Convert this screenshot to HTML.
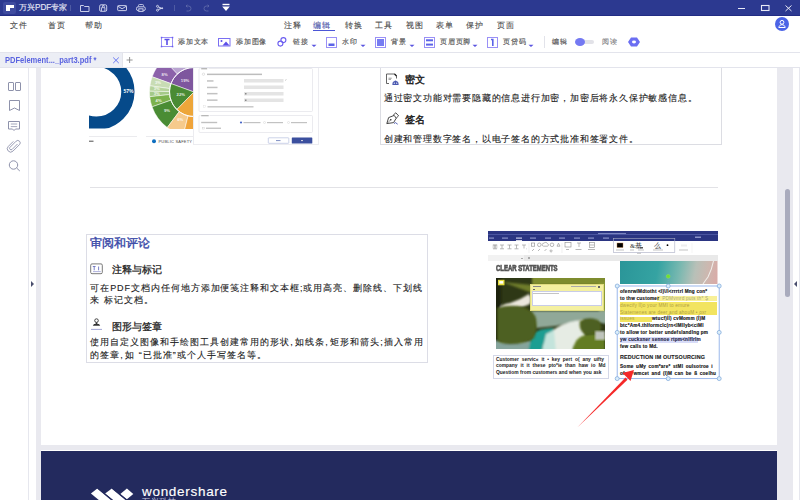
<!DOCTYPE html>
<html><head><meta charset="utf-8">
<style>
*{margin:0;padding:0;box-sizing:border-box}
html,body{width:800px;height:500px;overflow:hidden;background:#fff;font-family:"Liberation Sans",sans-serif;color:#333}
.a{position:absolute}
.t{position:absolute;white-space:nowrap;line-height:1}
#title{z-index:5;left:0;top:0;width:800px;height:16px;background:#2c3990;border-bottom:1px solid #222c84}
#menu{z-index:5;left:0;top:16px;width:800px;height:15px;background:#fff}
#tool{z-index:5;left:0;top:31px;width:800px;height:22px;background:#fff;border-bottom:1px solid #e3e4ec}
#tabs{z-index:5;left:0;top:53px;width:800px;height:15px;background:#fff;border-bottom:1px solid #e3e4ec}
.m{font-size:7.9px;color:#4a4a4a;letter-spacing:1px;-webkit-text-stroke:0.1px #4a4a4a}
.tl{font-size:6.7px;color:#555;letter-spacing:0.75px;-webkit-text-stroke:0.15px #555}
.c{margin-right:1.5px}
.bt{font-size:10px;color:#222;-webkit-text-stroke:0.12px #222}
.hd{font-size:9.8px;color:#222;-webkit-text-stroke:0.28px #222}
.arr{position:absolute;width:0;height:0;border-left:2.5px solid transparent;border-right:2.5px solid transparent;border-top:3px solid #4b55d6}
</style></head><body>
<!-- title bar -->
<div id="title" class="a">
  <div class="a" style="left:3px;top:2px;width:13px;height:12px;background:#3e4b9f;border-radius:2px"></div>
  <div class="a" style="left:6px;top:5px;width:8px;height:3px;background:#fff"></div>
  <div class="a" style="left:6px;top:8px;width:4px;height:3px;background:#fff"></div>
  <div class="t" style="left:19px;top:4px;font-size:8.2px;color:#e4e6f4;-webkit-text-stroke:0.15px #e4e6f4">万兴PDF专家</div>
  <svg class="a" style="left:0;top:0" width="800" height="15" fill="none" stroke="#c9cde8" stroke-width="1">
    <line x1="70.5" y1="5" x2="70.5" y2="11" stroke="#4f5ba3"/>
    <path d="M80.5 5.5h3l1 1h4.5v5h-8.5z"/>
    <rect x="99.7" y="4.8" width="7" height="6.5" rx="1.3"/><path d="M101.5 11v-3.3h3.4v3.3 M102.3 7.7l0.3-2.2h1.4l0.3 2.2" stroke-width="0.9"/>
    <rect x="117.7" y="5.6" width="8.8" height="5" rx="0.6"/><path d="M117.9 6.2l4.2 2.6 4.2-2.6"/>
    <path d="M138.5 6.5v-1a1 1 0 0 1 1-1h3a1 1 0 0 1 1 1v1" stroke-width="0.9"/><rect x="136.5" y="6.8" width="8.8" height="3.8" rx="1.6"/><rect x="138.8" y="8.8" width="4.2" height="2.6" fill="#2c3990"/>
    <circle cx="157.5" cy="6.3" r="1"/><circle cx="157.5" cy="10.2" r="1"/><path d="M158.4 6.9l4.6 1.9 M158.4 9.6l4.6-1.9" stroke-width="1.1"/>
    <line x1="174.5" y1="5" x2="174.5" y2="11" stroke="#4f5ba3"/>
    <path d="M186 6h2.5a2.5 2.5 0 0 1 0 5h-2 M186 6l1.3-1.3 M186 6l1.3 1.3" stroke="#5a65a8"/>
    <path d="M209 6h-2.5a2.5 2.5 0 0 0 0 5h2 M209 6l-1.3-1.3 M209 6l-1.3 1.3" stroke="#5a65a8"/>
    <path d="M222.5 4.5h7" stroke="#fff" stroke-width="1.4"/><path d="M222.2 6.5h7.6l-3.8 4.5z" fill="#fff" stroke="none"/>
    <line x1="738" y1="8.5" x2="745" y2="8.5" stroke="#e8eaf6"/>
    <rect x="761.5" y="5.5" width="7.5" height="5" stroke="#e8eaf6" stroke-width="1.1"/>
    <path d="M785.5 5.5l6 5.5 M791.5 5.5l-6 5.5" stroke="#e8eaf6"/>
  </svg>
</div>
<!-- menu -->
<div id="menu" class="a">
  <div class="t m" style="left:10px;top:5.7px">文件</div>
  <div class="t m" style="left:48px;top:5.7px">首页</div>
  <div class="t m" style="left:85px;top:5.7px">帮助</div>
  <div class="t m" style="left:284px;top:5.7px">注释</div>
  <div class="t m" style="left:313px;top:5.7px;color:#4b55d6">编辑</div>
  <div class="a" style="left:313px;top:13.6px;width:22px;height:1.4px;background:#4b55d6"></div>
  <div class="t m" style="left:345px;top:5.7px">转换</div>
  <div class="t m" style="left:375px;top:5.7px">工具</div>
  <div class="t m" style="left:406px;top:5.7px">视图</div>
  <div class="t m" style="left:436px;top:5.7px">表单</div>
  <div class="t m" style="left:466px;top:5.7px">保护</div>
  <div class="t m" style="left:497px;top:5.7px">页面</div>
  <div class="a" style="left:775px;top:0.6px;width:14px;height:14px;border-radius:50%;background:#4b63e6"></div>
  <svg class="a" style="left:775px;top:0.6px" width="14" height="14" fill="none" stroke="#fff" stroke-width="1"><circle cx="7" cy="5.3" r="1.9"/><path d="M3.8 10.5c0.4-2 1.6-2.8 3.2-2.8s2.8 0.8 3.2 2.8z"/></svg>
</div>
<!-- toolbar -->
<div id="tool" class="a">
  <svg class="a" style="left:0;top:0" width="800" height="21" fill="none" stroke="#6c5ff0" stroke-width="1">
    <rect x="161.5" y="6.5" width="11" height="9" stroke="#9a90f6"/>
    <rect x="160.8" y="5.8" width="1.5" height="1.5" fill="#6c5ff0" stroke="none"/><rect x="171.8" y="5.8" width="1.5" height="1.5" fill="#6c5ff0" stroke="none"/>
    <rect x="160.8" y="14.8" width="1.5" height="1.5" fill="#6c5ff0" stroke="none"/><rect x="171.8" y="14.8" width="1.5" height="1.5" fill="#6c5ff0" stroke="none"/>
    <path d="M164.5 8.5h5 M167 8.5v5.5" stroke="#5b4ee8" stroke-width="1.6"/>
    <rect x="218.5" y="7.5" width="11.5" height="7.5" stroke="#7a6ff2"/>
    <circle cx="221.5" cy="10" r="1" fill="#5b4ee8" stroke="none"/>
    <path d="M222.5 14.5l3.5-4 3.5 4z" fill="#5b4ee8" stroke="none"/>
    <circle cx="280.4" cy="12.6" r="2.5" stroke="#6a5cf0" stroke-width="1.1"/><circle cx="283.4" cy="9.1" r="2.5" stroke="#6a5cf0" stroke-width="1.1"/>
    <rect x="326.5" y="6.5" width="10" height="10" stroke="#9a90f6"/><rect x="328.5" y="12.5" width="6" height="2.5" fill="#5b63e8" stroke="none"/>
    <rect x="375.5" y="6.5" width="10" height="10" stroke="#9a90f6"/><rect x="377" y="8" width="7" height="7" fill="#767cf2" stroke="none"/>
    <rect x="424.5" y="6.5" width="10" height="10" stroke="#9a90f6"/><rect x="426" y="8.3" width="7" height="2" fill="#5b63e8" stroke="none"/><rect x="426" y="12.6" width="7" height="2" fill="#5b63e8" stroke="none"/>
    <rect x="487.5" y="6.5" width="10" height="10" stroke="#9a90f6"/><path d="M491 8.5h1.8v6.5" stroke="#5b63e8" stroke-width="1.6"/>
    <path d="M311.5 13.8h5l-2.5 2.2z M360.5 13.8h5l-2.5 2.2z M409.5 13.8h5l-2.5 2.2z M472.5 13.8h5l-2.5 2.2z M528.5 13.8h5l-2.5 2.2z" fill="#5a55e0" stroke="none"/>
    <line x1="544.5" y1="5" x2="544.5" y2="17" stroke="#e2e3ea"/>
    <path d="M631 6.5h6l3 4.5-3 4.5h-6l-3-4.5z" fill="#6b6ef2" stroke="none"/>
    <ellipse cx="634" cy="11" rx="2" ry="1.4" fill="#fff" stroke="none"/>
  </svg>
  <div class="t tl" style="left:178px;top:8px">添加文本</div>
  <div class="t tl" style="left:236px;top:8px">添加图像</div>
  <div class="t tl" style="left:293px;top:8px">链接</div>
  <div class="t tl" style="left:342px;top:8px">水印</div>
  <div class="t tl" style="left:391px;top:8px">背景</div>
  <div class="t tl" style="left:440px;top:8px">页眉页脚</div>
  <div class="t tl" style="left:503px;top:8px">页贷码</div>
  <div class="t tl" style="left:552px;top:8px">编辑</div>
  <div class="a" style="left:576px;top:9px;width:18px;height:4px;border-radius:2px;background:#e2e2e8"></div>
  <div class="a" style="left:575px;top:6.8px;width:9.8px;height:8px;border-radius:50%;background:#7479f2"></div>
  <div class="t tl" style="left:602px;top:8px;color:#b0b0b8">阅读</div>
</div>
<!-- tabs -->
<div id="tabs" class="a">
  <div class="a" style="left:0;top:0;width:122px;height:14px;background:#eceef5"></div>
  <div class="t" style="left:5px;top:3px;font-size:8.3px;font-weight:bold;color:#5a63e0;transform:scaleX(0.91);transform-origin:0 0">PDFelement..._part3.pdf *</div>
  <svg class="a" style="left:0;top:0" width="140" height="16" fill="none" stroke="#5a6af0" stroke-width="0.9">
    <path d="M113.2 4.5l5.6 5.6 M118.8 4.5l-5.6 5.6"/>
    <path d="M129.6 4v6 M126.6 7h6" stroke="#888"/>
    <line x1="122.5" y1="0" x2="122.5" y2="14" stroke="#e0e1e8"/>
  </svg>
</div>
<!-- sidebar -->
<div class="a" style="left:0;top:68px;width:28px;height:432px;background:#fff"></div>
<div class="a" style="left:28px;top:68px;width:1px;height:432px;background:#e6e7ee"></div>
<div class="a" style="left:36px;top:68px;width:5px;height:432px;background:#e9e9ef"></div>
<div class="a" style="left:777px;top:68px;width:16px;height:432px;background:#e9e9ef"></div>
<div class="a" style="left:799px;top:68px;width:1px;height:432px;background:#e6e7ee"></div>
<div class="a" style="left:785px;top:189px;width:5px;height:108px;border-radius:3px;background:#a9abbd"></div>
<svg class="a" style="left:0;top:68px" width="28" height="110" fill="none" stroke="#8e92ab" stroke-width="1">
  <rect x="8.5" y="14.5" width="5" height="8" rx="0.5"/><rect x="15.5" y="14.5" width="5" height="8" rx="0.5"/>
  <path d="M9.5 32.5h10v10l-5-2.5-5 2.5z"/>
  <path d="M8.5 53.5h11v7.5h-4l-1.5 1.5-1.5-1.5h-4z"/><path d="M10.8 56h6.4 M10.8 58.6h6.4" stroke-width="0.8"/>
  <path d="M17.5 76l-5.5 5.5a1.5 1.5 0 0 1-2.1-2.1l6.2-6.2a2.4 2.4 0 0 1 3.4 3.4l-6.5 6.5a3.3 3.3 0 0 1-4.7-4.7l5-5" stroke-width="0.9"/>
  <circle cx="13.5" cy="97" r="4.2"/><path d="M16.6 100l3.2 3"/>
</svg>
<div class="a" style="left:31px;top:281px;width:0;height:0;border-top:3.5px solid transparent;border-bottom:3.5px solid transparent;border-left:3.5px solid #4a4e6e"></div>
<div class="a" style="left:794px;top:281px;width:0;height:0;border-top:3.5px solid transparent;border-bottom:3.5px solid transparent;border-right:3.5px solid #4a4e6e"></div>
<!-- page content top -->
<svg class="a" style="left:89px;top:68px" width="104" height="80">
  <defs><clipPath id="cd"><rect x="0" y="0" width="104" height="60.5"/></clipPath></defs>
  <g clip-path="url(#cd)">
    <circle cx="7.4" cy="23.7" r="31.5" fill="none" stroke="#064a8a" stroke-width="13.3"/>
  </g>
  <text x="34.5" y="25" font-size="5" font-weight="bold" fill="#fff" font-family="Liberation Sans">57%</text>
  <line x1="0" y1="68.5" x2="48" y2="68.5" stroke="#e6e6ea" stroke-width="0.8"/>
  <rect x="0" y="72.6" width="4.5" height="1.3" fill="#777"/>
  <line x1="57" y1="68.5" x2="104" y2="68.5" stroke="#e6e6ea" stroke-width="0.8"/>
  <circle cx="65" cy="73.2" r="2" fill="#0e6fc0"/>
  <text x="69.5" y="74.8" font-size="4" fill="#4a4a4a" font-family="Liberation Sans" letter-spacing="0.2">PUBLIC SAFETY</text>
</svg>
<svg class="a" style="left:140px;top:68px" width="53" height="60.5" id="sun"><path d="M23.65,-8.55 A44.5,44.5 0 0 1 76.25,-14.54 L66.25,2.78 A24.5,24.5 0 0 0 37.29,6.08 Z" fill="#b9a4d0" stroke="#fff" stroke-width="0.5"/><path d="M12.18,8.78 A44.5,44.5 0 0 1 23.65,-8.55 L37.29,6.08 A24.5,24.5 0 0 0 30.98,15.62 Z" fill="#8c62aa" stroke="#fff" stroke-width="0.5"/><path d="M9.93,17.81 A44.5,44.5 0 0 1 12.18,8.78 L30.98,15.62 A24.5,24.5 0 0 0 29.74,20.59 Z" fill="#c8dcb4" stroke="#fff" stroke-width="0.5"/><path d="M9.51,23.22 A44.5,44.5 0 0 1 9.93,17.81 L29.74,20.59 A24.5,24.5 0 0 0 29.50,23.57 Z" fill="#b6d39c" stroke="#fff" stroke-width="0.5"/><path d="M9.74,28.65 A44.5,44.5 0 0 1 9.51,23.22 L29.50,23.57 A24.5,24.5 0 0 0 29.63,26.56 Z" fill="#a4c988" stroke="#fff" stroke-width="0.5"/><path d="M12.05,38.85 A44.5,44.5 0 0 1 9.74,28.65 L29.63,26.56 A24.5,24.5 0 0 0 30.91,32.18 Z" fill="#7cb24e" stroke="#fff" stroke-width="0.5"/><path d="M27.22,59.54 A44.5,44.5 0 0 1 12.05,38.85 L30.91,32.18 A24.5,24.5 0 0 0 39.26,43.57 Z" fill="#4a8c34" stroke="#fff" stroke-width="0.5"/><path d="M43.23,67.18 A44.5,44.5 0 0 1 27.22,59.54 L39.26,43.57 A24.5,24.5 0 0 0 48.07,47.77 Z" fill="#f6ca8c" stroke="#fff" stroke-width="0.5"/><path d="M76.25,62.54 A44.5,44.5 0 0 1 43.23,67.18 L48.07,47.77 A24.5,24.5 0 0 0 66.25,45.22 Z" fill="#f0a43a" stroke="#fff" stroke-width="0.5"/><path d="M54,24 L30.98,15.62 A24.5,24.5 0 0 1 66.25,2.78 Z" fill="#7e569e" stroke="#fff" stroke-width="0.5"/><path d="M54,24 L36.83,41.47 A24.5,24.5 0 0 1 30.98,15.62 Z" fill="#4a8b34" stroke="#fff" stroke-width="0.5"/><path d="M54,24 L66.25,45.22 A24.5,24.5 0 0 1 36.83,41.47 Z" fill="#eda63a" stroke="#fff" stroke-width="0.5"/><circle cx="54" cy="24" r="24.5" fill="none" stroke="#fff" stroke-width="0.9"/><text x="24.6" y="8.1" font-size="4.2" font-weight="bold" fill="#fff" fill-opacity="0.85" text-anchor="middle" font-family="Liberation Sans">8%</text><text x="45.0" y="13.7" font-size="4.2" font-weight="bold" fill="#fff" fill-opacity="0.85" text-anchor="middle" font-family="Liberation Sans">19%</text><text x="18.0" y="16.1" font-size="4.2" font-weight="bold" fill="#fff" fill-opacity="0.85" text-anchor="middle" font-family="Liberation Sans">3%</text><text x="16.8" y="22.1" font-size="4.2" font-weight="bold" fill="#fff" fill-opacity="0.85" text-anchor="middle" font-family="Liberation Sans">3%</text><text x="16.8" y="26.9" font-size="4.2" font-weight="bold" fill="#fff" fill-opacity="0.85" text-anchor="middle" font-family="Liberation Sans">3%</text><text x="18.6" y="34.1" font-size="4.2" font-weight="bold" fill="#fff" fill-opacity="0.85" text-anchor="middle" font-family="Liberation Sans">4%</text><text x="40.8" y="27.5" font-size="4.2" font-weight="bold" fill="#fff" fill-opacity="0.85" text-anchor="middle" font-family="Liberation Sans">22%</text><text x="27.0" y="44.3" font-size="4.2" font-weight="bold" fill="#fff" fill-opacity="0.85" text-anchor="middle" font-family="Liberation Sans">9%</text><text x="40.2" y="53.3" font-size="4.2" font-weight="bold" fill="#fff" fill-opacity="0.85" text-anchor="middle" font-family="Liberation Sans">6%</text></svg>
<!-- dialog -->
<div class="a" style="left:192.5px;top:68px;width:126.5px;height:77px;background:#fff;border-right:1px solid #ececf0;border-bottom:1px solid #ececf0;border-left:0.5px solid #ececf0"></div>
<svg class="a" style="left:193px;top:68px" width="126" height="78" font-family="Liberation Sans">
  <rect x="6" y="0.5" width="113.5" height="43" rx="1" fill="none" stroke="#e2e2e8" stroke-width="0.7"/>
  <rect x="7.5" y="-1" width="8" height="2.5" fill="#fff"/>
  <rect x="8.2" y="0" width="6" height="1.4" fill="#b8b8b8"/>
  <circle cx="10.5" cy="6.2" r="1.2" fill="none" stroke="#c8c8c8" stroke-width="0.5"/>
  <rect x="14" y="5.6" width="55" height="1.5" fill="#bdbdbd"/>
  <rect x="14" y="12.2" width="6.5" height="1.5" fill="#c2c2c2"/>
  <rect x="14" y="18.7" width="10.5" height="1.5" fill="#c2c2c2"/>
  <rect x="14" y="24.9" width="10.5" height="1.5" fill="#c2c2c2"/>
  <rect x="14" y="31.4" width="10.5" height="1.5" fill="#c2c2c2"/>
  <rect x="51" y="11" width="39.5" height="3.5" fill="#e4e4e4"/>
  <rect x="51" y="17.5" width="39.5" height="3.5" fill="#e4e4e4"/>
  <rect x="51" y="24" width="39.5" height="3.5" fill="#e4e4e4"/>
  <rect x="51" y="30.5" width="39.5" height="3.5" fill="#e4e4e4"/>
  <rect x="52" y="25" width="1.5" height="1.5" fill="#888"/><rect x="52" y="31.5" width="1.5" height="1.5" fill="#888"/>
  <path d="M92 12.5l1.5-1" stroke="#999" stroke-width="0.5"/>
  <rect x="10.5" y="37.7" width="1.8" height="1.8" fill="none" stroke="#ddd" stroke-width="0.4"/>
  <rect x="14.5" y="38.1" width="46" height="1.4" fill="#c6c6c6"/>
  <rect x="6" y="47.5" width="113.5" height="17" rx="1" fill="none" stroke="#e2e2e8" stroke-width="0.7"/>
  <rect x="7.5" y="46.5" width="9" height="2" fill="#fff"/>
  <rect x="8.2" y="47" width="7.5" height="1.3" fill="#b8b8b8"/>
  <rect x="8.2" y="53.8" width="16" height="1.4" fill="#c0c0c0"/>
  <circle cx="48" cy="54.5" r="1.1" fill="#4a66c8"/>
  <rect x="50.5" y="54" width="17" height="1.2" fill="#c2c2c2"/>
  <circle cx="71.5" cy="54.5" r="1" fill="none" stroke="#c8c8c8" stroke-width="0.4"/>
  <rect x="74" y="54" width="16" height="1.2" fill="#c2c2c2"/>
  <circle cx="95.5" cy="54.5" r="1" fill="none" stroke="#c8c8c8" stroke-width="0.4"/>
  <rect x="98" y="54" width="16" height="1.2" fill="#c2c2c2"/>
  <rect x="9.5" y="59.2" width="1.8" height="1.8" fill="none" stroke="#c8c8c8" stroke-width="0.4"/>
  <rect x="13" y="59.6" width="15" height="1.3" fill="#c0c0c0"/>
  <rect x="75.3" y="69.8" width="20.5" height="5.5" rx="0.6" fill="#fff" stroke="#a8b4d8" stroke-width="0.6"/>
  <rect x="83" y="72" width="4.5" height="1.1" fill="#8a98c8"/>
  <rect x="98.8" y="69.5" width="20.5" height="6" rx="0.6" fill="#3b4f9e"/>
  <rect x="108" y="72" width="2" height="1.1" fill="#ccd"/>
</svg>
<!-- right box 1 -->
<div class="a" style="left:380px;top:60px;width:342px;height:85px;border:1px solid #dcdde3;background:#fff"></div>
<svg class="a" style="left:380px;top:68px" width="24" height="60" fill="none">
  <path d="M9 15.5h-2.5v-9.5h8.5l1.5 1.5v3" stroke="#555" stroke-width="0.9"/>
  <path d="M14.5 6l2 2" stroke="#222" stroke-width="1.3"/>
  <path d="M8.5 10.2h3.3 M8.5 11.4h2.5" stroke="#777" stroke-width="0.7"/>
  <path d="M12.4 16.2a3.1 3.1 0 0 1 6.2 0z M12.4 16.2h6.2v0.8h-6.2z" fill="#4a58b0"/>
  <circle cx="15.5" cy="13.4" r="1" fill="#4a58b0"/>
  <circle cx="14.3" cy="15.2" r="0.6" fill="#fff"/><circle cx="16.7" cy="15.2" r="0.6" fill="#fff"/>
  <path d="M6.8 55.6 L8.6 49.6 L14.2 47.4 L16.2 50.2 L13.6 54.6z" stroke="#333" stroke-width="0.9"/>
  <path d="M13.2 47.2 L15.8 44.8 L18.6 47.8 L16.2 50.2" stroke="#333" stroke-width="0.9"/>
  <circle cx="10.8" cy="51.8" r="0.8" fill="#222"/>
  <path d="M10.5 52 L7.5 55" stroke="#333" stroke-width="0.5"/>
  <path d="M14 55.6l1.4-1 2.3 1.6" stroke="#4a58b0" stroke-width="0.9"/>
</svg>
<div class="t hd" style="left:405px;top:75px;font-size:10.2px;-webkit-text-stroke:0.45px #222">密文</div>
<div class="t bt" style="left:383.8px;top:94.3px;font-size:8.8px;letter-spacing:0.8px">通过密文功能对需要隐藏的信息进行加密，加密后将永久保护敏感信息。</div>
<div class="t hd" style="left:405px;top:115px;font-size:10.2px;-webkit-text-stroke:0.45px #222">签名</div>
<div class="t bt" style="left:383.8px;top:134.5px;font-size:8.8px;letter-spacing:0.8px">创建和管理数字签名，以电子签名的方式批准和签署文件。</div>
<!-- separator -->
<div class="a" style="left:90px;top:187px;width:628px;height:1px;background:#e2e2e6"></div>
<!-- review box -->
<div class="a" style="left:86px;top:233.5px;width:341.5px;height:129.5px;border:1px solid #dcdde6;background:#fff"></div>
<div class="t" style="left:90px;top:237.6px;font-size:11.9px;color:#3a4aa8;-webkit-text-stroke:0.4px #3a4aa8">审阅和评论</div>
<svg class="a" style="left:86px;top:260px" width="20" height="72" fill="none">
  <rect x="4.7" y="3.9" width="11.6" height="9.8" rx="1.3" stroke="#7a7a7a" stroke-width="1"/>
  <path d="M6.8 6.5h2.8 M8.2 6.5v3.8 M12.6 6.5v3.8" stroke="#6a72c0" stroke-width="0.9"/>
  <path d="M7 11.6h7.8" stroke="#7a80c8" stroke-width="0.6"/>
  <circle cx="10.5" cy="60.6" r="1.8" stroke="#333" stroke-width="0.9"/>
  <path d="M9.6 62.4h1.8v1.6h-1.8z" fill="#333"/>
  <path d="M6.8 65.8l1.2-1.8h5l1.2 1.8z" fill="#333"/>
  <path d="M5 69.4h11" stroke="#8a90cc" stroke-width="0.8"/>
</svg>
<div class="t hd" style="left:112px;top:264.5px">注释与标记</div>
<div class="t bt" style="left:90.3px;top:284px;font-size:9px;letter-spacing:0.94px">可在PDF文档内任何地方添加便笺注释和文本框;或用高亮、删除线、下划线</div>
<div class="t bt" style="left:90.3px;top:296.3px;font-size:9px;letter-spacing:1px">来 标记文档。</div>
<div class="t hd" style="left:112px;top:321.8px">图形与签章</div>
<div class="t bt" style="left:90.3px;top:338.3px;font-size:9px;letter-spacing:1px">使用自定义图像和手绘图工具创建常用的形状<span class="c">,</span>如线条<span class="c">,</span>矩形和箭头;插入常用</div>
<div class="t bt" style="left:90.3px;top:351.1px;font-size:9px;letter-spacing:1px">的签章<span class="c">,</span>如 “已批准”或个人手写签名等。</div>
<!-- embedded screenshot -->
<div class="a" id="emb" style="left:488px;top:231px;width:230px;height:150px;overflow:visible">
  <!-- title bar -->
  <div class="a" style="left:0;top:0;width:229.5px;height:10px;background:#2b3582"></div>
  <div class="a" style="left:0;top:3px;width:229.5px;height:0.6px;background:#4a55a0"></div>
  <div class="a" style="left:110px;top:1.5px;width:28px;height:1px;background:#7a84c0"></div>
  <svg class="a" style="left:0;top:0" width="230" height="24">
    <g fill="#8c93c8">
      <rect x="1" y="6.5" width="5" height="1.2"/><rect x="14" y="6.5" width="6" height="1.2"/><rect x="28" y="6.5" width="6" height="1.2" fill="#c8cce8"/>
      <rect x="42" y="6.5" width="6" height="1.2"/><rect x="57" y="6.5" width="6" height="1.2"/><rect x="71" y="6.5" width="6" height="1.2"/>
      <rect x="86" y="6.5" width="6" height="1.2"/><rect x="100" y="6.5" width="6" height="1.2"/><rect x="115" y="6.5" width="6" height="1.2"/>
      <rect x="207" y="5.5" width="6" height="1.5"/>
    </g>
    <rect x="28" y="9.2" width="6" height="0.8" fill="#fff"/>
  </svg>
  <!-- toolbar -->
  <div class="a" style="left:0;top:10px;width:229.5px;height:14px;background:#fff"></div>
  <svg class="a" style="left:0;top:10px" width="230" height="14" fill="none" stroke="#8a8a8a" stroke-width="0.6">
    <rect x="4.5" y="3.5" width="5" height="4" fill="#ddd" stroke="none"/>
    <path d="M5 4h4 M7 4v3.5 M5 7.8h4"/>
    <path d="M12 4h4 M14 4v3.5 M12 7.8h4"/>
    <path d="M19.5 4h4 M21.5 4v3.5 M19.5 7.8h4"/>
    <path d="M26.5 4h4 M28.5 4v3.5 M26.5 7.8h4"/>
    <path d="M34 4h4 M36 4v3.5 M38.5 7.8h0.5"/>
    <line x1="41" y1="2" x2="41" y2="12" stroke="#e6e6e6"/>
    <rect x="43.5" y="2" width="3.2" height="3.2"/><circle cx="51.3" cy="3.8" r="1.8"/><path d="M55.5 5.2a1.5 1.5 0 0 1 0.5-3 2 2 0 0 1 3.5 0.5 1.3 1.3 0 0 1 0 2.5z"/><circle cx="64" cy="3.8" r="1.8"/><path d="M69 5.2l1.5-3 1.5 3z"/>
    <path d="M44 10l2-2 M50 10l2-2 M56.5 10l2-2 M63 9a1 1 0 1 0 0.1 0"/>
    <line x1="74" y1="2" x2="74" y2="12" stroke="#e6e6e6"/>
    <rect x="77" y="1.5" width="6" height="4.5"/><path d="M89 2h4 M91 2v4"/><rect x="101.5" y="1.5" width="5" height="5"/><path d="M102 4h4"/>
    <g fill="#b8b8b8" stroke="none"><rect x="78" y="8" width="3" height="1"/><rect x="87.5" y="8" width="6" height="1"/><rect x="100" y="8" width="7" height="1"/></g>
    
    <rect x="129" y="2" width="6" height="4.5" fill="#000" stroke="#c08040" stroke-width="0.4"/>
    <text x="142" y="7" font-size="6.5" fill="#333" stroke="none" font-family="Liberation Serif">&amp;基</text>
    <rect x="152" y="6" width="3" height="1.5" fill="#555" stroke="none"/>
    <text x="166" y="7.3" font-size="7" fill="#444" stroke="none" font-family="Liberation Serif">么</text>
    <circle cx="179.5" cy="4.2" r="0.9" fill="#000" stroke="none"/>
    <g fill="#c4c4c4" stroke="none"><rect x="128" y="8.5" width="8" height="1"/><rect x="142" y="8.5" width="4" height="1"/><rect x="150" y="8.5" width="6" height="1"/><rect x="165" y="8.5" width="10" height="1"/><rect x="149" y="11.8" width="4" height="1"/><rect x="191" y="8.5" width="9" height="1"/></g>
    <rect x="193" y="3.5" width="6" height="2" fill="#eee" stroke="none"/>
    <line x1="204" y1="2" x2="204" y2="12" stroke="#eee"/>
  </svg>
  <svg class="a" style="left:0;top:0" width="230" height="24"><rect x="125.3" y="7.3" width="61.5" height="14.2" fill="none" stroke="#a8acc4" stroke-width="0.6"/></svg>
  <!-- gray strip -->
  <div class="a" style="left:0;top:24px;width:229.5px;height:6px;background:#e9e9e9"></div>
  <div class="a" style="left:0;top:24px;width:36px;height:6px;background:#f2f2f2"></div>
  <div class="a" style="left:33px;top:26.5px;width:0;height:0;border-left:1px solid transparent;border-right:1px solid transparent;border-top:1.2px solid #666"></div>
  <div class="a" style="left:40px;top:26px;width:2px;height:1.5px;background:#aaa"></div>
  <!-- page -->
  <div class="a" style="left:0;top:30px;width:229.5px;height:120px;background:#fff"></div>
  <div class="t" style="left:8px;top:32.5px;font-size:8.5px;font-weight:bold;color:#555;transform:scaleX(0.70);transform-origin:0 0;letter-spacing:0px;-webkit-text-stroke:0.7px #555">CLEAR STATEMENTS</div>
</div>
<!-- island photo -->
<svg class="a" style="left:496.3px;top:277.8px" width="109" height="71">
  <defs>
    <filter id="bl" x="-10%" y="-10%" width="120%" height="120%"><feGaussianBlur stdDeviation="0.9"/></filter>
    <clipPath id="pc"><rect width="109" height="71"/></clipPath>
    <pattern id="tex" width="3" height="3" patternUnits="userSpaceOnUse"><rect width="3" height="3" fill="#34461a"/><circle cx="1" cy="1" r="0.9" fill="#7a8e22"/></pattern>
    <pattern id="tex2" width="3" height="3" patternUnits="userSpaceOnUse"><rect width="3" height="3" fill="#46621c"/><circle cx="1.5" cy="1.5" r="0.9" fill="#9aae30"/></pattern>
  </defs>
  <g clip-path="url(#pc)">
  <rect width="109" height="71" fill="#2e3816"/>
  <g filter="url(#bl)">
    <rect x="36" y="-3" width="76" height="10" fill="#7e8c2e"/>
    <rect x="103" y="5" width="8" height="30" fill="#8a9a34"/>
    <path d="M6 4 L36 7 L36 15 Z" fill="#6e7c2a"/>
    <rect x="-3" y="-3" width="8" height="70" fill="#1e2410"/>
    <path d="M34 33 L111 33 L111 46 L84 42 L60 48 L40 50z" fill="#90a898"/>
    <path d="M-3 63 L34 62 L34 74 L-3 74z" fill="#86a49c"/>
    <path d="M32 74 L36 56 Q44 50 58 50 L54 74z" fill="#1f9e92"/>
    <path d="M46 74 Q48 58 60 50 Q74 42 88 42 L90 74z" fill="#e6ece4"/>
    <path d="M46 74 L50 56 L58 52 L60 74z" fill="#c4e4dc"/>
    <path d="M4 31 Q5 26 14 25 Q24 22 33 16 Q36 20 34 26 Q26 30 16 31 Q8 34 6 34z" fill="#ebe7dd"/>
  </g>
  <path d="M1 30 Q10 27 22 28 Q36 30 40 40 Q42 52 38 60 Q30 66 14 66 Q4 66 1 62z" fill="url(#tex)" filter="url(#bl)"/>
  <path d="M84 43 Q92 38 102 42 Q108 48 104 54 Q96 58 88 56 Q82 50 84 43z" fill="url(#tex)" filter="url(#bl)"/>
  <path d="M76 74 Q78 62 86 58 Q98 54 109 58 L109 74z" fill="url(#tex2)" filter="url(#bl)"/>
  <rect x="99" y="53" width="10" height="9" fill="#bfc4bc" filter="url(#bl)"/>
  </g>
  <rect x="2" y="1.8" width="6.5" height="5.5" fill="#e4dc3a"/>
  <rect x="3.3" y="3.1" width="3.9" height="2.5" fill="#fff"/>
</svg>
<!-- note -->
<div class="a" style="left:530px;top:283.5px;width:73.5px;height:27.5px;background:#f4f0a0;border:0.5px solid #e0dc80"></div>
<div class="a" style="left:532px;top:290.5px;width:70px;height:15px;background:#fff;border:0.6px solid #c8cce8"></div>
<div class="a" style="left:533px;top:286px;width:8px;height:1.2px;background:#888"></div>
<div class="a" style="left:533px;top:288.5px;width:2px;height:0.6px;background:#666"></div>
<div class="a" style="left:571px;top:286px;width:25px;height:1px;background:#aaa"></div>
<div class="a" style="left:598px;top:286px;width:2px;height:1.5px;background:#666"></div>
<div class="a" style="left:533px;top:292.5px;width:26px;height:1px;background:#c4c4c4"></div>
<!-- caption box -->
<div class="a" style="left:492.5px;top:354.5px;width:116px;height:24px;border:0.8px solid #d4d8e8;background:#fff"></div>
<div class="t" style="left:496px;top:357.6px;font-size:4.9px;font-weight:bold;color:#222;word-spacing:1.5px">Customer servic« it • key pert o( any uifty</div>
<div class="t" style="left:496px;top:364.3px;font-size:4.9px;font-weight:bold;color:#222;word-spacing:1.7px">company it it these pto*ie than haw io Md</div>
<div class="t" style="left:496px;top:371.2px;font-size:4.9px;font-weight:bold;color:#222;word-spacing:0.2px">Questiom from customers and when you ask</div>
<!-- teal photo -->
<svg class="a" style="left:620px;top:260.7px" width="97.5" height="23">
  <defs>
    <linearGradient id="tg" gradientUnits="userSpaceOnUse" x1="0" y1="-6" x2="97" y2="12">
      <stop offset="0" stop-color="#2a9598"/><stop offset="0.4" stop-color="#35a3a2"/><stop offset="0.62" stop-color="#78b8b0"/><stop offset="0.78" stop-color="#b8c0b8"/><stop offset="0.9" stop-color="#ccb8b0"/><stop offset="1" stop-color="#d8aca8"/>
    </linearGradient>
  </defs>
  <rect width="97.5" height="23" fill="url(#tg)"/>
  <path d="M93.5 0 Q92 8 88 16 Q85 20 83 23" stroke="#f4f6f2" stroke-width="1.1" fill="none" opacity="0.85"/>
</svg>
<!-- selection texts -->
<div class="a" style="left:657px;top:296.3px;width:60px;height:5.2px;background:#f8f098"></div>
<div class="a" style="left:620px;top:302.3px;width:97px;height:13px;background:#f2e460"></div>
<div class="a" style="left:620px;top:316.5px;width:32px;height:5.5px;background:#f2e460"></div>
<div class="a" style="left:620px;top:337.3px;width:78px;height:5.5px;background:#d8dcf8"></div>
<div class="a" id="seltext" style="left:620px;top:289px;width:100px;font-size:4.7px;font-weight:bold;color:#111;line-height:6.85px;white-space:nowrap;letter-spacing:0.2px;-webkit-text-stroke:0.12px #111">
  <div>ofenrwlMdtotht &lt;l)\/l&lt;rrrtrl Mng con*</div>
  <div>to thw customer <span style="color:#a8a878;font-weight:normal;-webkit-text-stroke:0">&nbsp;PDMvmrd puts th* Ş</span></div>
  <div style="color:#b0a040;font-weight:normal;-webkit-text-stroke:0">dwecify ĺĺ)o your MMl to emure</div>
  <div style="color:#b0a040;font-weight:normal;-webkit-text-stroke:0">Statemenes are deer and ahouM • oxr</div>
  <div><span style="color:#b0a040;font-weight:normal;-webkit-text-stroke:0;display:inline-block;width:32px">issues</span>wtucf)ĺĺ) cvMomm (ĺ)M</div>
  <div>btc*Am4.thlformclc(rn&lt;lMllyb&lt;ciMl</div>
  <div>to allow tor better undefslandlng pm</div>
  <div style="color:#2a2a5a">yw cuckxner sennoe rtpm&lt;nlflrlm</div>
  <div>few calls to Md.</div>
</div>
<div class="t" style="left:620px;top:355.1px;font-size:5.4px;font-weight:bold;color:#222;letter-spacing:0.15px;-webkit-text-stroke:0.12px #222">REDUCTION IM OUTSOURCING</div>
<div class="t" style="left:620px;top:365px;font-size:4.7px;font-weight:bold;color:#111;word-spacing:1px;letter-spacing:0.2px;-webkit-text-stroke:0.12px #111">Some uMy com*are* stMl oulsotroe i</div>
<div class="t" style="left:620px;top:371.7px;font-size:4.7px;font-weight:bold;color:#111;word-spacing:1px;letter-spacing:0.2px;-webkit-text-stroke:0.12px #111">ofuu wmcet and (l)M can be ß coelhu</div>
<!-- selection box -->
<svg class="a" style="left:612px;top:272px" width="112" height="112">
  <rect x="5.2" y="14" width="102" height="92.6" fill="none" stroke="#8fb0e8" stroke-width="0.9"/>
  <line x1="56.2" y1="6" x2="56.2" y2="12" stroke="#7aa0c8" stroke-width="0.5" stroke-dasharray="1,1"/>
  <circle cx="56.2" cy="4.3" r="1.9" fill="#6fe030" stroke="#9ae060" stroke-width="0.4"/>
  <g fill="#dceefa" stroke="#78a4d8" stroke-width="0.7">
    <circle cx="5.2" cy="14" r="2"/><circle cx="56.2" cy="14" r="2"/><circle cx="107.2" cy="14" r="2"/>
    <circle cx="5.2" cy="60.4" r="2"/><circle cx="107.2" cy="60.4" r="2"/>
    <circle cx="5.2" cy="106.6" r="2"/><circle cx="56.2" cy="106.6" r="2"/><circle cx="107.2" cy="106.6" r="2"/>
  </g>
</svg>
<!-- red arrow -->
<svg class="a" style="left:570px;top:362px" width="70" height="70">
  <path d="M7.3 65.5 L55.5 15.5 L57.5 17.8z" fill="#f52828"/>
  <path d="M64 8 L52.5 11 L60.5 19z" fill="#f52828"/>
</svg>
<!-- page bottom -->
<div class="a" style="left:41px;top:445px;width:736px;height:5px;background:#e9e9ef"></div>
<div class="a" style="left:41px;top:451px;width:736px;height:49px;background:#232a5e"></div>
<!-- footer logo -->
<svg class="a" style="left:80px;top:480px;z-index:2" width="60" height="20">
  <g fill="#fff">
    <path d="M10.9 13.6 L17.3 8.4 L32 20.3 L25.6 25.5z"/>
    <path d="M25.1 13.6 L31.9 8.4 L46.6 20.3 L39.8 25.5z"/>
    <path d="M46.9 8.4 L53.3 14 L46.9 19.2 L40.3 14z"/>
  </g>
  <path d="M17.5 8 L32.5 20.5" stroke="#232a5e" stroke-width="1.3"/>
  <path d="M32 8 L47 20.5" stroke="#232a5e" stroke-width="1.3"/>
</svg>
<div class="t" style="left:142px;top:485.3px;font-size:13.5px;color:#fff;z-index:2;letter-spacing:0.7px;-webkit-text-stroke:0.15px #fff">wondershare</div>
<div class="t" style="left:142px;top:497.6px;font-size:7.5px;color:#c8cce0;letter-spacing:0.6px;z-index:2">万兴科技</div>
</body></html>
